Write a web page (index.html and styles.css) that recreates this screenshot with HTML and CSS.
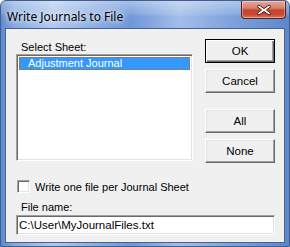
FILE: index.html
```html
<!DOCTYPE html>
<html>
<head>
<meta charset="utf-8">
<link rel="stylesheet" href="styles.css">
</head>
<body>
<div class="window">
  <div class="titlebar">
    <span class="title">Write Journals to File</span>
    <div class="close">
      <svg width="18" height="12" viewBox="0 0 18 12">
        <path d="M4 1 L9 4.5 L14 1 L16 2.5 L11.5 6 L16 9.5 L14 11 L9 7.5 L4 11 L2 9.5 L6.5 6 L2 2.5 Z" fill="#fff" stroke="#4a1a12" stroke-width="1" stroke-linejoin="round"/>
      </svg>
    </div>
  </div>
  <div class="client">
    <div class="top">
      <div class="left">
        <div class="label">Select Sheet:</div>
        <div class="listbox">
          <div class="item selected">Adjustment Journal</div>
        </div>
      </div>
      <div class="buttons">
        <div class="btn default">OK</div>
        <div class="btn">Cancel</div>
        <div class="btn spaced">All</div>
        <div class="btn">None</div>
      </div>
    </div>
    <div class="check-row">
      <span class="checkbox"></span>
      <span>Write one file per Journal Sheet</span>
    </div>
    <div class="label file-label">File name:</div>
    <div class="textbox">C:\User\MyJournalFiles.txt</div>
  </div>
</div>
</body>
</html>
```
FILE: styles.css
```css
html, body {
  margin: 0;
  padding: 0;
}
body {
  width: 290px;
  height: 247px;
  overflow: hidden;
  font-family: "Liberation Sans", Arial, sans-serif;
  font-size: 11px;
  color: #000;
}
.window {
  width: 290px;
  height: 247px;
  box-sizing: border-box;
  background: linear-gradient(90deg, #5f88cf 0%, #86a9e2 5%, #b0c8ee 18%, #8caee3 32%, #6f96d8 45%, #a2bdea 62%, #7ea2dd 80%, #5e86cf 100%);
  border: 1px solid #3f5f8e;
  border-radius: 6px 6px 0 0;
  display: flex;
  flex-direction: column;
}
.titlebar {
  height: 27px;
  display: flex;
  align-items: flex-start;
  justify-content: space-between;
  padding-left: 6px;
  background: linear-gradient(180deg, rgba(255,255,255,0.4) 0%, rgba(255,255,255,0.15) 45%, rgba(255,255,255,0) 60%);
  border-radius: 5px 5px 0 0;
}
.title {
  font-family: "Noto Sans", "Open Sans", sans-serif;
  font-size: 12px;
  margin-top: 7px;
  color: #000;
  text-shadow: 0 0 8px rgba(255,255,255,0.95), 0 0 4px rgba(255,255,255,0.9);
}
.close {
  width: 45px;
  height: 18px;
  margin-right: 3px;
  box-sizing: border-box;
  border: 1px solid #5b2017;
  border-top: none;
  border-radius: 0 0 4px 4px;
  background: linear-gradient(180deg, #e8a89b 0%, #d8826f 40%, #c4432c 55%, #c84a33 80%, #db7a62 100%);
  box-shadow: inset 0 0 0 1px rgba(255,255,255,0.35);
  display: flex;
  align-items: center;
  justify-content: center;
}
.close svg { display: block; }
.client {
  flex: 1;
  margin: 0 4px 3px 4px;
  background: #f0f0f0;
  border: 1px solid #4a6288;
  box-sizing: border-box;
  padding: 10px 9px 0 10px;
  display: flex;
  flex-direction: column;
}
.top {
  display: flex;
  gap: 12px;
}
.left {
  flex: 1;
  display: flex;
  flex-direction: column;
}
.label {
  margin-left: 5px;
  margin-top: 2px;
  line-height: 13px;
  height: 13px;
}
.listbox {
  height: 107px;
  background: #fff;
  box-sizing: border-box;
  border-top: 1px solid #a0a0a0;
  border-left: 1px solid #a0a0a0;
  border-right: 1px solid #fff;
  border-bottom: 1px solid #fff;
  box-shadow: inset 1px 1px 0 #696969, inset -1px -1px 0 #e3e3e3;
  padding: 2px 2px;
}
.item {
  height: 13px;
  line-height: 13px;
  padding-left: 9px;
}
.item.selected {
  background: #3399ff;
  color: #fff;
  outline: 1px dotted #c86400;
  outline-offset: -1px;
}
.buttons {
  width: 70px;
  display: flex;
  flex-direction: column;
  gap: 6px;
}
.btn {
  height: 24px;
  box-sizing: border-box;
  background: #f0f0f0;
  border-top: 1px solid #ffffff;
  border-left: 1px solid #ffffff;
  border-right: 1px solid #696969;
  border-bottom: 1px solid #696969;
  box-shadow: inset -1px -1px 0 #a0a0a0, inset 1px 1px 0 #e3e3e3;
  display: flex;
  align-items: center;
  justify-content: center;
  font-size: 11.5px;
}
.btn.default {
  border: 1px solid #000;
  box-shadow: inset 1px 1px 0 #fff, inset -1px -1px 0 #696969, inset -2px -2px 0 #a0a0a0;
}
.btn.spaced {
  margin-top: 10px;
}
.check-row {
  display: flex;
  align-items: center;
  margin-top: 17px;
  margin-left: 1px;
  height: 13px;
}
.checkbox {
  width: 13px;
  height: 13px;
  box-sizing: border-box;
  background: #fff;
  border-top: 1px solid #a0a0a0;
  border-left: 1px solid #a0a0a0;
  border-right: 1px solid #fff;
  border-bottom: 1px solid #fff;
  box-shadow: inset 1px 1px 0 #696969, inset -1px -1px 0 #e3e3e3;
  margin-right: 5px;
}
.file-label {
  margin-top: 8px;
}
.textbox {
  margin-top: 1px;
  width: 259px;
  height: 20px;
  box-sizing: border-box;
  background: #fff;
  border-top: 1px solid #a0a0a0;
  border-left: 1px solid #a0a0a0;
  border-right: 1px solid #fff;
  border-bottom: 1px solid #fff;
  box-shadow: inset 1px 1px 0 #696969, inset -1px -1px 0 #e3e3e3;
  padding-left: 2px;
  line-height: 18px;
  font-size: 11.5px;
}
```
